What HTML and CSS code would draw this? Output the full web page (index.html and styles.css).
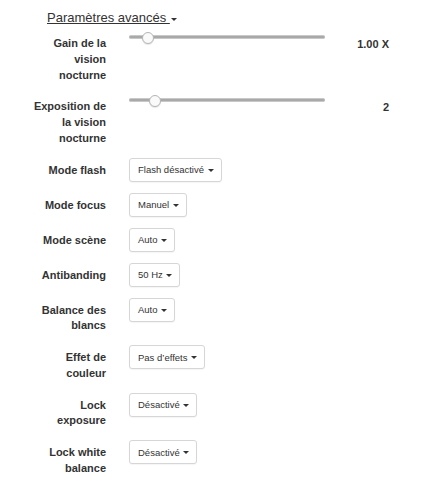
FILE: index.html
```html
<!DOCTYPE html>
<html lang="fr">
<head>
    <meta charset="UTF-8">
    <meta name="viewport" content="width=device-width, initial-scale=1.0">
    <title>Paramètres avancés</title>
    <link rel="stylesheet" href="styles.css">
</head>
<body>
    <div class="panel">
        <div class="panel-title">
            <a href="#" class="toggle">Paramètres avancés </a>
            <span class="caret"></span>
        </div>

        <div class="row">
            <label class="row-label">Gain de la vision nocturne</label>
            <div class="row-control">
                <input type="range" class="slider" min="0" max="100" value="7">
            </div>
            <div class="row-value">1.00 X</div>
        </div>

        <div class="row">
            <label class="row-label">Exposition de la vision nocturne</label>
            <div class="row-control">
                <input type="range" class="slider" min="0" max="100" value="10.6">
            </div>
            <div class="row-value">2</div>
        </div>

        <div class="row">
            <label class="row-label">Mode flash</label>
            <div class="row-control">
                <button class="dropdown">Flash désactivé <span class="caret"></span></button>
            </div>
        </div>

        <div class="row">
            <label class="row-label">Mode focus</label>
            <div class="row-control">
                <button class="dropdown">Manuel <span class="caret"></span></button>
            </div>
        </div>

        <div class="row">
            <label class="row-label">Mode scène</label>
            <div class="row-control">
                <button class="dropdown">Auto <span class="caret"></span></button>
            </div>
        </div>

        <div class="row">
            <label class="row-label">Antibanding</label>
            <div class="row-control">
                <button class="dropdown">50 Hz <span class="caret"></span></button>
            </div>
        </div>

        <div class="row">
            <label class="row-label">Balance des blancs</label>
            <div class="row-control">
                <button class="dropdown">Auto <span class="caret"></span></button>
            </div>
        </div>

        <div class="row">
            <label class="row-label">Effet de couleur</label>
            <div class="row-control">
                <button class="dropdown">Pas d’effets <span class="caret"></span></button>
            </div>
        </div>

        <div class="row">
            <label class="row-label">Lock exposure</label>
            <div class="row-control">
                <button class="dropdown">Désactivé <span class="caret"></span></button>
            </div>
        </div>

        <div class="row">
            <label class="row-label">Lock white balance</label>
            <div class="row-control">
                <button class="dropdown">Désactivé <span class="caret"></span></button>
            </div>
        </div>
    </div>
</body>
</html>
```

FILE: styles.css
```css
body {
    margin: 0;
    font-family: "Liberation Sans", Arial, Helvetica, sans-serif;
    background-color: #ffffff;
    color: #333333;
}

.panel {
    padding-top: 10px;
}

.panel-title {
    display: flex;
    align-items: center;
    margin-left: 47px;
    height: 16px;
    margin-bottom: 5px;
}

.toggle {
    font-size: 13px;
    line-height: 16px;
    color: #333;
    text-decoration: underline;
    white-space: pre;
}

.panel-title .caret {
    margin-left: 1px;
    margin-top: 2px;
}

.caret {
    display: inline-block;
    width: 0;
    height: 0;
    border-top: 3px solid #333;
    border-left: 3px solid transparent;
    border-right: 3px solid transparent;
    vertical-align: middle;
}

.row {
    display: flex;
    align-items: flex-start;
    margin-bottom: 11px;
}

.row-label {
    width: 106px;
    flex-shrink: 0;
    box-sizing: border-box;
    padding: 5px 0 0 32px;
    text-align: right;
    font-size: 11px;
    font-weight: bold;
    line-height: 15.75px;
    color: #333;
}

.row-control {
    margin-left: 23px;
}

.row-value {
    width: 64px;
    padding-top: 5px;
    text-align: right;
    font-size: 11px;
    font-weight: bold;
    line-height: 16px;
}

/* slider */
.slider {
    -webkit-appearance: none;
    appearance: none;
    display: block;
    margin: 0;
    width: 196px;
    height: 12px;
    background: transparent;
}

.slider::-webkit-slider-runnable-track {
    height: 4px;
    background: #a9a9a9;
    border-top: 1px solid #c8c8c8;
    border-bottom: 1px solid #c8c8c8;
    box-sizing: border-box;
    border-radius: 2px;
}

.slider::-webkit-slider-thumb {
    -webkit-appearance: none;
    width: 12px;
    height: 12px;
    margin-top: -4px;
    border-radius: 50%;
    background: #fafafa;
    border: 1px solid #b5b5b5;
    box-sizing: border-box;
    box-shadow: 0 1px 1px rgba(0, 0, 0, 0.1);
}

/* dropdown buttons */
.dropdown {
    display: flex;
    align-items: center;
    height: 24px;
    margin: 0;
    padding: 0 7px 0 8px;
    font-family: inherit;
    font-size: 9.5px;
    color: #333;
    background: #fff;
    border: 1px solid #d6d6d6;
    border-radius: 3px;
    box-shadow: 0 1px 1px rgba(0, 0, 0, 0.04);
    white-space: pre;
    cursor: pointer;
}

.dropdown .caret {
    margin-left: 1px;
    margin-top: 1px;
}
```
